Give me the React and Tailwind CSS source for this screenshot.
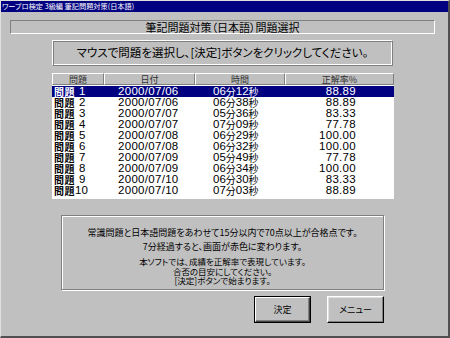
import React from "react";

const rows = [
  ["1", "2000/07/06", "06", "12", "88.89"],
  ["2", "2000/07/06", "06", "38", "88.89"],
  ["3", "2000/07/07", "05", "36", "83.33"],
  ["4", "2000/07/07", "07", "09", "77.78"],
  ["5", "2000/07/08", "06", "29", "100.00"],
  ["6", "2000/07/08", "06", "32", "100.00"],
  ["7", "2000/07/09", "05", "49", "77.78"],
  ["8", "2000/07/09", "06", "34", "100.00"],
  ["9", "2000/07/10", "06", "30", "83.33"],
  ["10", "2000/07/10", "07", "03", "88.89"],
];

const jp = "font-['Noto_Sans_CJK_JP',sans-serif] [font-feature-settings:'palt']";
const num = "font-['Liberation_Sans','Noto_Sans_CJK_JP',sans-serif]";

function HeadCell({ w, children }) {
  return (
    <div
      className={`${w} h-full flex items-center justify-center border-t border-l border-white border-r border-b border-r-[#808080] border-b-[#808080] text-[9px] leading-none text-[#303030] ${jp}`}
    >
      {children}
    </div>
  );
}

export default function App() {
  return (
    <div className="w-[450px] h-[338px] bg-[#c0c0c0] border-t border-l border-[#dfdfdf] border-r-2 border-b-2 border-r-[#505050] border-b-[#505050] flex flex-col overflow-hidden">
      <div className={`h-[11px] bg-[#000080] text-white text-[7.2px] leading-[11px] pl-[1px] whitespace-nowrap ${jp}`}>
        ワープロ検定 3級編 筆記問題対策(日本語)
      </div>

      <div className={`mt-[8px] ml-[9px] w-[425px] h-[14px] border border-t-[#808080] border-l-[#808080] border-b-white border-r-white flex items-center justify-center text-[11px] leading-none text-black ${jp}`}>
        筆記問題対策（日本語）問題選択
      </div>

      <div className={`mt-[6px] ml-[51px] w-[341px] h-[26px] border border-t-white border-l-white border-b-[#808080] border-r-[#808080] shadow-[inset_1px_1px_0_#808080,inset_-1px_-1px_0_#ffffff] flex items-center justify-center text-[11.5px] leading-none text-black ${jp}`}>
        マウスで問題を選択し、[決定]ボタンをクリックしてください。
      </div>

      <div className="mt-[7px] ml-[51px] w-[342px] flex flex-col">
        <div className="h-[12px] flex">
          <HeadCell w="w-[52px]">問題</HeadCell>
          <HeadCell w="w-[91px]">日付</HeadCell>
          <HeadCell w="w-[90px]">時間</HeadCell>
          <HeadCell w="w-[109px]">正解率%</HeadCell>
        </div>
        <div className="h-[114px] bg-white pt-[1px]">
          {rows.map((r, i) => {
            const sel = i === 0;
            return (
              <div
                key={i}
                className={`h-[11px] flex items-center text-[11.5px] leading-[11px] ${sel ? "bg-[#000080] text-white" : "text-black"}`}
              >
                <div className="w-[66px] h-[11px] pl-[2px] flex items-center whitespace-nowrap">
                  <div className={`${jp} h-[11px] font-semibold text-[10px] leading-[11px] tracking-[0.5px]`}>問題</div>
                  <div className={`${num} h-[11px] leading-[11px] ${r[0].length === 1 ? "ml-[4px]" : ""}`}>{r[0]}</div>
                </div>
                <div className={`w-[95px] h-[11px] ${num} tracking-[0.3px]`}>{r[1]}</div>
                <div className={`w-[90px] h-[11px] flex items-center whitespace-nowrap ${num}`}>
                  <div className="h-[11px]">{r[2]}</div>
                  <div className={`${jp} h-[11px] text-[10px] leading-[11px]`}>分</div>
                  <div className="h-[11px]">{r[3]}</div>
                  <div className={`${jp} h-[11px] text-[10px] leading-[11px]`}>秒</div>
                </div>
                <div className={`w-[53px] h-[11px] text-right ${num} tracking-[0.3px]`}>{r[4]}</div>
              </div>
            );
          })}
        </div>
      </div>

      <div className={`mt-[16px] ml-[60px] w-[323px] h-[75px] border border-[#808080] shadow-[inset_1px_1px_0_#ffffff,1px_1px_0_#ffffff] flex flex-col items-center pt-[10px] text-[9px] text-black ${jp}`}>
        <div className="leading-[14px]">常識問題と日本語問題をあわせて15分以内で70点以上が合格点です。</div>
        <div className="leading-[14px]">7分経過すると、画面が赤色に変わります。</div>
        <div className="mt-[3px] flex flex-col items-center text-[8.5px] leading-[9.5px]">
          <div>本ソフトでは、成績を正解率で表現しています。</div>
          <div>合否の目安にしてください。</div>
          <div>[決定]ボタンで始まります。</div>
        </div>
      </div>

      <div className={`mt-[6px] flex text-[9px] text-black ${jp}`}>
        <div className="ml-[253px] w-[57px] h-[27px] border border-black">
          <div className="w-full h-full border border-t-white border-l-white border-b-[#404040] border-r-[#404040] shadow-[inset_-1px_-1px_0_#808080] flex items-center justify-center">
            決定
          </div>
        </div>
        <div className="ml-[16px] w-[57px] h-[27px] border border-t-white border-l-white border-b-black border-r-black shadow-[inset_-1px_-1px_0_#808080,inset_1px_1px_0_#dfdfdf] flex items-center justify-center">
          メニュー
        </div>
      </div>
    </div>
  );
}
